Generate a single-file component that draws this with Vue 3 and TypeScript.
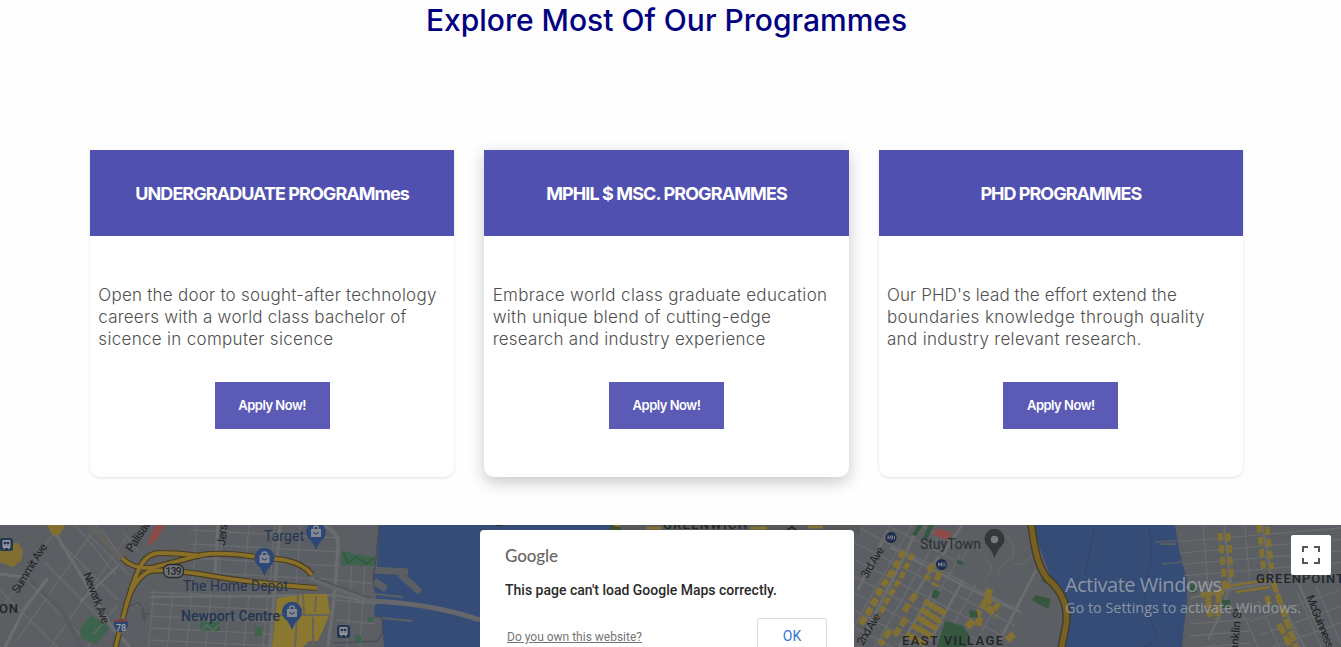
<script setup lang="ts">
interface Line { text: string; ls: string }
interface Programme { title: string; titleLs: string; lines: Line[]; raised?: boolean }

const programmes: Programme[] = [
  {
    title: 'UNDERGRADUATE PROGRAMmes', titleLs: '-0.95px',
    lines: [
      { text: 'Open the door to sought-after technology', ls: '0.24px' },
      { text: 'careers with a world class bachelor of', ls: '0.22px' },
      { text: 'sicence in computer sicence', ls: '0.31px' },
    ],
  },
  {
    title: 'MPHIL $ MSC. PROGRAMMES', titleLs: '-0.9px', raised: true,
    lines: [
      { text: 'Embrace world class graduate education', ls: '0.34px' },
      { text: 'with unique blend of cutting-edge', ls: '0.33px' },
      { text: 'research and industry experience', ls: '0.25px' },
    ],
  },
  {
    title: 'PHD PROGRAMMES', titleLs: '-1px',
    lines: [
      { text: "Our PHD's lead the effort extend the", ls: '0.1px' },
      { text: 'boundaries knowledge through quality', ls: '0.4px' },
      { text: 'and industry relevant research.', ls: '0.33px' },
    ],
  },
]

// Evenly spaced parallel streets, as one path
function streets(n: number, x: number, y: number, sx: number, sy: number, dx: number, dy: number): string {
  let d = ''
  for (let i = 0; i < n; i++) d += `M${x + i * sx} ${y + i * sy}l${dx} ${dy}`
  return d
}

const grids: { clip: string; d: string }[] = [
  {
    clip: 'jersey',
    d: streets(5, 150, 592, 0, 12, 125, 6) + streets(7, 154, 590, 19, 1, -6, 60) + streets(5, 197, 525, 26, 0, -5, 60)
      + streets(4, 190, 530, 0, 14, 150, 8) + streets(2, 352, 562, 13, 1, -5, 85) + streets(3, 336, 580, 0, 20, 40, 4),
  },
  {
    clip: 'west',
    d: streets(5, 0, 590, 22, -14, 60, 60) + streets(5, -10, 625, 28, 14, 80, -115) + streets(3, 76, 525, 24, 4, 40, 50),
  },
  {
    clip: 'village',
    d: streets(16, 832, 480, 0, 17, 190, 98) + streets(5, 912, 525, 27, 10, -70, 122),
  },
  {
    clip: 'brooklyn',
    d: streets(5, 1175, 542, 0, 11.5, 166, -14) + streets(4, 1203, 525, 21, 0, 5, 60) + streets(5, 1240, 606, 19, -5, 26, 60)
      + streets(4, 1190, 612, 0, 12, 60, -5) + streets(3, 1250, 622, 10, 13, 90, -32),
  },
]

interface Label { t: string; x: number; y: number; w: number; s: number; r?: number; k: string }
const labels: Label[] = [
  { t: 'Palisad', x: 132, y: 553, w: 36, s: 12, r: -57, k: 'road' },
  { t: 'Jerse', x: 225, y: 546, w: 28, s: 12, r: -84, k: 'road' },
  { t: 'Summit Ave', x: 18, y: 594, w: 56, s: 11.5, r: -58, k: 'road' },
  { t: 'Newark Ave', x: 83, y: 574, w: 54, s: 11.5, r: 69, k: 'road' },
  { t: 'ON', x: -1, y: 613, w: 19, s: 13, k: 'area' },
  { t: 'The Home Depot', x: 183, y: 591, w: 105, s: 14, k: 'place' },
  { t: 'Target', x: 264, y: 541, w: 40, s: 14, k: 'place' },
  { t: 'Newport Centre', x: 181, y: 621, w: 99, s: 14, k: 'place strong' },
  { t: 'GREENWICH', x: 663, y: 529, w: 84, s: 13, k: 'area' },
  { t: '3rd Ave', x: 867, y: 579, w: 34, s: 11.5, r: -59, k: 'road' },
  { t: '2nd Ave', x: 863, y: 646, w: 35, s: 11.5, r: -59, k: 'road' },
  { t: 'StuyTown', x: 920, y: 549, w: 61, s: 14, k: 'park' },
  { t: 'EAST VILLAGE', x: 902, y: 645, w: 101, s: 13, k: 'area' },
  { t: 'GREENPOINT', x: 1256, y: 583, w: 88, s: 13, k: 'area' },
  { t: 'Franklin St', x: 1237, y: 661, w: 53, s: 11.5, r: -85, k: 'road' },
  { t: 'McGuinness', x: 1306, y: 597, w: 56, s: 11.5, r: 68, k: 'road' },
]
const bags: [number, number][] = [[316, 532], [264.5, 558], [292, 612]]
</script>

<template>
  <main class="page">
    <h1 class="heading"><span>Explore Most Of Our Programmes</span></h1>
    <section class="cards">
      <article v-for="p in programmes" :key="p.title" class="card" :class="{ raised: p.raised }">
        <h2 class="title"><span :style="{ letterSpacing: p.titleLs }">{{ p.title }}</span></h2>
        <p class="copy">
          <span v-for="l in p.lines" :key="l.text" class="line" :style="{ letterSpacing: l.ls }">{{ l.text }}</span>
        </p>
        <button class="apply" type="button">Apply Now!</button>
      </article>
    </section>
    <section class="map">
      <svg class="canvas" width="1341" height="122" viewBox="0 525 1341 122">
        <defs>
          <clipPath id="west"><path d="M0 525H150L118 600 112 647H0Z" /></clipPath>
          <clipPath id="jersey"><path d="M190 525H379L373 575 382 647H128L150 585Z" /></clipPath>
          <clipPath id="village"><path d="M850 525H955L965 578 1022 612 1005 647H850Z" /></clipPath>
          <clipPath id="brooklyn"><path d="M1176 525H1341V647H1184L1188 600Z" /></clipPath>
        </defs>
        <rect y="525" width="1341" height="122" fill="#5b5e62" />
        <path d="M379 525H612V647H384L382 617 374 616 376 595 373 573 377 568Z" fill="#344c76" />
        <path d="M1031 525H1175L1179 550 1187 580 1187 605 1184 625 1182 647H1058L1065 605 1050 575Z" fill="#344c76" />
        <g v-for="g in grids" :key="g.clip" :clip-path="`url(#${g.clip})`">
          <path :d="g.d" fill="none" stroke="#696b6e" stroke-width="1.3" />
        </g>
        <path d="M90 525L122 560" fill="none" stroke="#64625f" stroke-width="5" />
        <path d="M30 580L60 608 82 647" fill="none" stroke="#575a5e" stroke-width="4" />
        <path d="M0 574L22 577M5 647L25 608 48 578M50 525L60 541 84 580 112 628 130 647M318 525Q338 528 338 545L335 590 332 615 328 647M280 525L274 595 270 647M218 525L215 575" fill="none" stroke="#6a6c6e" stroke-width="3.5" />
        <path d="M118 566L95 588 80 602M150 597L260 596 335 595 370 602" fill="none" stroke="#6b6d6f" stroke-width="2.5" />
        <path d="M310 578L370 601Q430 603 480 620" fill="none" stroke="#66676a" stroke-width="5" />
        <path d="M315 578L370 598" fill="none" stroke="#535453" stroke-width="1.5" />
        <path d="M374 570L408 572M400 574L420 592M374 581L386 589" fill="none" stroke="#5b5f64" stroke-width="7" />
        <path d="M375 594L403 597M382 618L412 621M378 550l-7-6M155 541h21M1161 544h15" stroke="#5b5f64" stroke-width="2" />
        <path d="M379 525L375 568 373 577 375 593M375 616L382 618 383 632 378 641 334 643" fill="none" stroke="#414951" stroke-width="1" />
        <path d="M0 543h18l5 8-2 10-9 6-12-5ZM47 525h18l-5 9-7 2Z" fill="#816f31" />
        <path d="M277 598l23-3 3-1h24l3 20-12 27h-9l-7 7h-30Z" fill="#8a7730" />
        <path d="M303 594l1 20M316 596l-1 16M277 615h52M313 617v30M298 595l-3 52" stroke="#67655b" stroke-width="2" />
        <path d="M149 540l7-15h9l-9 15-7 6Z" fill="#8f4b48" />
        <path d="M80 628l11-12 10 5 9 7-14 16-15-6ZM200 622h20v9h-20ZM342 550l12 4 21 3-1 9-33-1ZM255 627h7v9h-7ZM355 635h6v8h-6ZM368 617h5v5h-5Z" fill="#3c634b" />
        <path d="M93 634l10-10M201 631l6-6 6 6 6-7" fill="none" stroke="#5b6b63" stroke-width="1.5" />
        <path d="M343 552l5 11 8-6 11 7 7-6" fill="none" stroke="#2c5038" stroke-width="1" />
        <path d="M130 606l8-4 5 6v11M141 614h9M145 615v7" stroke="#474c50" fill="none" />
        <!-- Interstate ramps -->
        <g fill="none" stroke-linejoin="round">
          <path d="M122 558Q135 571 155 567L201 555Q220 552 250 556L285 560Q304 564 312 575M115 650Q130 585 141 565 148 553 160 553 180 553 201 556M125 610Q132 579 150 571 165 569 200 574 250 583 317 588" stroke="#473d24" stroke-width="6" />
          <path d="M122 558Q135 571 155 567L201 555Q220 552 250 556L285 560Q304 564 312 575M115 650Q130 585 141 565 148 553 160 553 180 553 201 556M125 610Q132 579 150 571 165 569 200 574 250 583 317 588" stroke="#8a6f28" stroke-width="3.8" />
        </g>
        <rect x="163.500" y="564.500" width="20" height="13" rx="6" fill="#717477" stroke="#292b2e" stroke-width="1.3" />
        <text x="165.500" y="575" font-size="10" textLength="16" class="shield dark">139</text>
        <path d="M114 620q3 1 7-2 4 3 7 2l1 4q-1 7-8 9-7-2-8-9Z" fill="#2f456b" stroke="#686a6c" />
        <path d="M115 620.500h12" stroke="#8e3c37" stroke-width="2" />
        <text x="116" y="630.500" font-size="9" textLength="10" class="shield">78</text>
        <!-- Village blocks -->
        <path d="M890 547L962 585 1020 612M908 549L862 640M935 589L899 647M963 580L930 641M1036 570L1000 640M939 556L915 595M962 525L942 556M918 525L908 549M888 530L858 590" fill="none" stroke="#6a6c6e" stroke-width="3" />
        <g fill="none" stroke="#827033">
          <path d="M904 551L895 568 882 587 873 605 860 625" stroke-width="6.500" stroke-dasharray="8 3" />
          <path d="M913 554L901 577 889 597 878 618" stroke-width="5" stroke-dasharray="7 3" />
          <path d="M933 564L926 580M940 572L934 586M916 594L903 613M906 618L893 638M890 630L880 645" stroke-width="6" stroke-dasharray="9 3" />
          <path d="M924 601l22 13M921 609l20 13M917 617l20 12M912 625l21 12M906 634l20 10" stroke-width="6" />
          <path d="M990 589L985 603 975 618 966 629M985 597l14 11M987 607l10 9M980 617L977 628M1007 640l7-6" stroke-width="7" stroke-dasharray="9 3" />
        </g>
        <path d="M912 535l5-10h6l-7 11ZM923 537l6-12h5l-7 14ZM931 597l3-8 6 3-3 7ZM945 621l18 5 6 9-2 12h-30ZM1032 600l4-5 15 4-3 10ZM1041 575l6 4 8 10-13-8ZM956 560l5 1 4 4-7-1ZM969 610l8 1 1 7-8-1Z" fill="#35563f" />
        <path d="M937 528l15 5-4 7-15-5Z" fill="#8f4b48" />
        <path d="M985 555l7 14-7 12M962 560q8-20 20-7M1002 533q14 8 11 25-15 6-14 17M1010 562q15 8 22-8" fill="none" stroke="#65686c" stroke-width="1.3" />
        <path d="M1031 520Q1035 565 1048 579 1072 600 1065 630L1061 650" fill="none" stroke="#3f3b2c" stroke-width="8" />
        <path d="M1031 520Q1035 565 1048 579 1072 600 1065 630L1061 650" fill="none" stroke="#776020" stroke-width="5.500" />
        <path d="M1178 541L1155 542M1162 564l20-2" stroke="#525b6a" stroke-width="2" />
        <!-- Brooklyn blocks -->
        <path d="M1224 527L1231 583 1221 612 1208 640M1262 525L1272 580 1290 620 1306 650M1190 598L1232 589 1290 580M1298 582L1310 610 1328 647" fill="none" stroke="#696b6d" stroke-width="2.500" />
        <g fill="none" stroke="#827033">
          <path d="M1220 533l5 52M1228 533l4 48M1259 525l5 48M1267 527l5 42" stroke-width="5" stroke-dasharray="8 4" />
          <path d="M1230 586l37-6M1236 592l34-5" stroke-width="2.500" />
          <path d="M1222 587l8-2M1201 595l23-3M1208 597l2 20M1219 592l-2 27M1267 596l2 8M1273 582l14 40 10 28M1279 624l12 24" stroke-width="5.500" stroke-dasharray="11 2" />
        </g>
        <path d="M1191 584l7 2-2 7-7-1ZM1222 600h8v8h-8Z" fill="#35563f" />
        <path d="M1149 525q5 30-2 54t5 44-8 24M1095 525l-10 50" fill="none" stroke="#304569" />
        <!-- Land and streets visible above the dialog -->
        <path d="M610 525H860V535H613Z" fill="#56595c" />
        <path d="M610 525h9l3 6h-12Z" fill="#3d4b2e" />
        <path d="M614 525h6M647 528h14M750 528h17M808 527h15" stroke="#827033" stroke-width="3" />
        <path d="M496 525h7M786 531l6-4 5 4" fill="none" stroke="#22272c" stroke-width="2" />
        <!-- Map markers -->
        <g v-for="b in bags" :key="b[0]" :transform="`translate(${b[0]} ${b[1]})`">
          <path d="M0 18Q-3 10-7 7A10 10 0 1 1 7 7Q3 10 0 18Z" fill="#2d4878" />
          <path d="M-5-3H5V5H-5Z" fill="#85898f" />
          <path d="M-2.500-3v-.5a2.500 2.500 0 0 1 5 0v.5" fill="none" stroke="#85898f" stroke-width="1.300" />
          <path d="M-2.500 0q2.500 4 5 0" fill="none" stroke="#2d4878" stroke-width="1.200" />
        </g>
        <g v-for="t in [[6.5, 544.5], [343.5, 631.5]]" :key="t[0]" :transform="`translate(${t[0]} ${t[1]})`">
          <rect x="-6.500" y="-6.500" width="13" height="13" rx="2.500" fill="#243654" />
          <path d="M-3.500-4h7v7h-7ZM-3 5l2-2M3 5L1 3" fill="#94979c" stroke="#94979c" />
          <path d="M-2.500-2.500h2v2h-2ZM.5-2.500h2v2h-2ZM-2 1h1M1 1h1" fill="#243654" stroke="#243654" stroke-width=".6" />
        </g>
        <g v-for="m in [[891, 537.5], [941.5, 564.5]]" :key="m[0]" :transform="`translate(${m[0]} ${m[1]})`">
          <circle r="5.500" fill="#1c2b4d" /><path d="M-3 2v-4l1.500 3 1.500-3v4M1.500-2v4M3.500-2v4" fill="none" stroke="#7b8088" />
        </g>
        <path d="M994.500 558Q991 549 987.500 546A10 10 0 1 1 1001.500 546Q998 549 994.500 558Z" fill="#34383b" />
        <circle cx="994.500" cy="539.500" r="3.700" fill="#777b7e" />
        <text
          v-for="l in labels" :key="l.t" :class="l.k" :font-size="l.s" :textLength="l.w"
          :transform="`translate(${l.x} ${l.y}) rotate(${l.r ?? 0})`"
        >{{ l.t }}</text>
        <g class="notice">
          <text x="1065" y="592" font-size="20" textLength="157">Activate Windows</text>
          <text x="1065" y="613" font-size="14.500" textLength="236" lengthAdjust="spacingAndGlyphs">Go to Settings to activate Windows.</text>
        </g>
      </svg>
      <button class="fullscreen" type="button" aria-label="Toggle fullscreen view">
        <svg width="18" height="18" viewBox="0 0 18 18"><path d="M1 6V1h5M12 1h5v5M17 12v5h-5M6 17H1v-5" fill="none" stroke="#555" stroke-width="2" /></svg>
      </button>
      <div class="dialog">
        <div class="brand">Google</div>
        <div class="message">This page can't load Google Maps correctly.</div>
        <div class="actions">
          <a class="owner">Do you own this website?</a>
          <button class="ok" type="button">OK</button>
        </div>
      </div>
    </section>
  </main>
</template>

<style>
html, body { margin: 0; overflow: hidden; background: #fff; }
</style>
<style scoped>
.page { width: 1341px; height: 647px; overflow: hidden; font-family: Inter, sans-serif; background: #fefefe; }
.heading { box-sizing: border-box; height: 150px; margin: 0; padding: 0 8px 0 0; text-align: center; color: navy; font-size: 30px; line-height: 40px; font-weight: 500; }
.heading span { letter-spacing: 0; }
.cards { display: grid; grid-template-columns: repeat(3, 1fr); gap: 30px; padding: 0 98px 0 90px; height: 375px; box-sizing: border-box; align-items: start; }
.card { height: 327px; border-radius: 0 0 10px 10px; background: #fff; box-shadow: 0 1px 3px rgba(0,0,0,.12); display: flex; flex-direction: column; align-items: center; }
.raised { box-shadow: 0 5px 16px rgba(0,0,0,.22); }
.title { height: 86px; width: 100%; margin: 0; background: #5050b0; color: #fff; font-size: 18px; font-weight: 700; line-height: 87px; text-align: center; white-space: nowrap; }
.copy { box-sizing: border-box; width: 100%; margin: 48px 0 32px; padding-left: 8.3px; color: #505050; font-size: 17px; font-weight: 300; line-height: 22px; }
.line { display: block; width: max-content; white-space: nowrap; }
.apply { width: 115px; height: 47px; border: 0; padding: 0 0 1px; background: #5b5bb6; color: #fff; font: 600 13px Inter, sans-serif; letter-spacing: -.5px; }
.map { position: relative; height: 122px; overflow: hidden; }
.canvas { display: block; font-family: Roboto, sans-serif; }
.road { fill: #202124; }
.area { fill: #222427; font-weight: 500; }
.place { fill: #233552; }
.strong { font-weight: 500; }
.park { fill: #292e31; }
.shield { fill: #a4a7ac; font-weight: 500; }
.dark { fill: #222; }
.notice { fill: #a3a9b1; fill-opacity: .8; font-family: "Open Sans", sans-serif; font-weight: 400; }
.fullscreen { position: absolute; right: 10px; top: 10px; width: 40px; height: 40px; border: 0; border-radius: 2px; background: #fff; display: grid; place-items: center; padding: 0; }
.dialog { position: absolute; left: 480px; top: 5px; width: 374px; height: 160px; box-sizing: border-box; border-radius: 4px 4px 0 0; background: #fff; padding: 15px 27px 0 25px; font-family: Roboto, sans-serif; }
.brand { height: 21px; font: 500 17px/21px Lato, sans-serif; color: #666; letter-spacing: -.1px; }
.message { margin-top: 15px; font-size: 14px; line-height: 18px; font-weight: 500; color: #2a2a2a; white-space: nowrap; }
.actions { display: flex; justify-content: space-between; margin-top: 19px; padding-left: 2px; }
.owner { color: #757575; font-size: 12px; line-height: 38px; text-decoration: underline; }
.ok { width: 70px; height: 36px; border: 1px solid #dadce0; border-radius: 3px; background: #fff; color: #3277d5; font: 400 14px Roboto, sans-serif; padding: 0; }
</style>
